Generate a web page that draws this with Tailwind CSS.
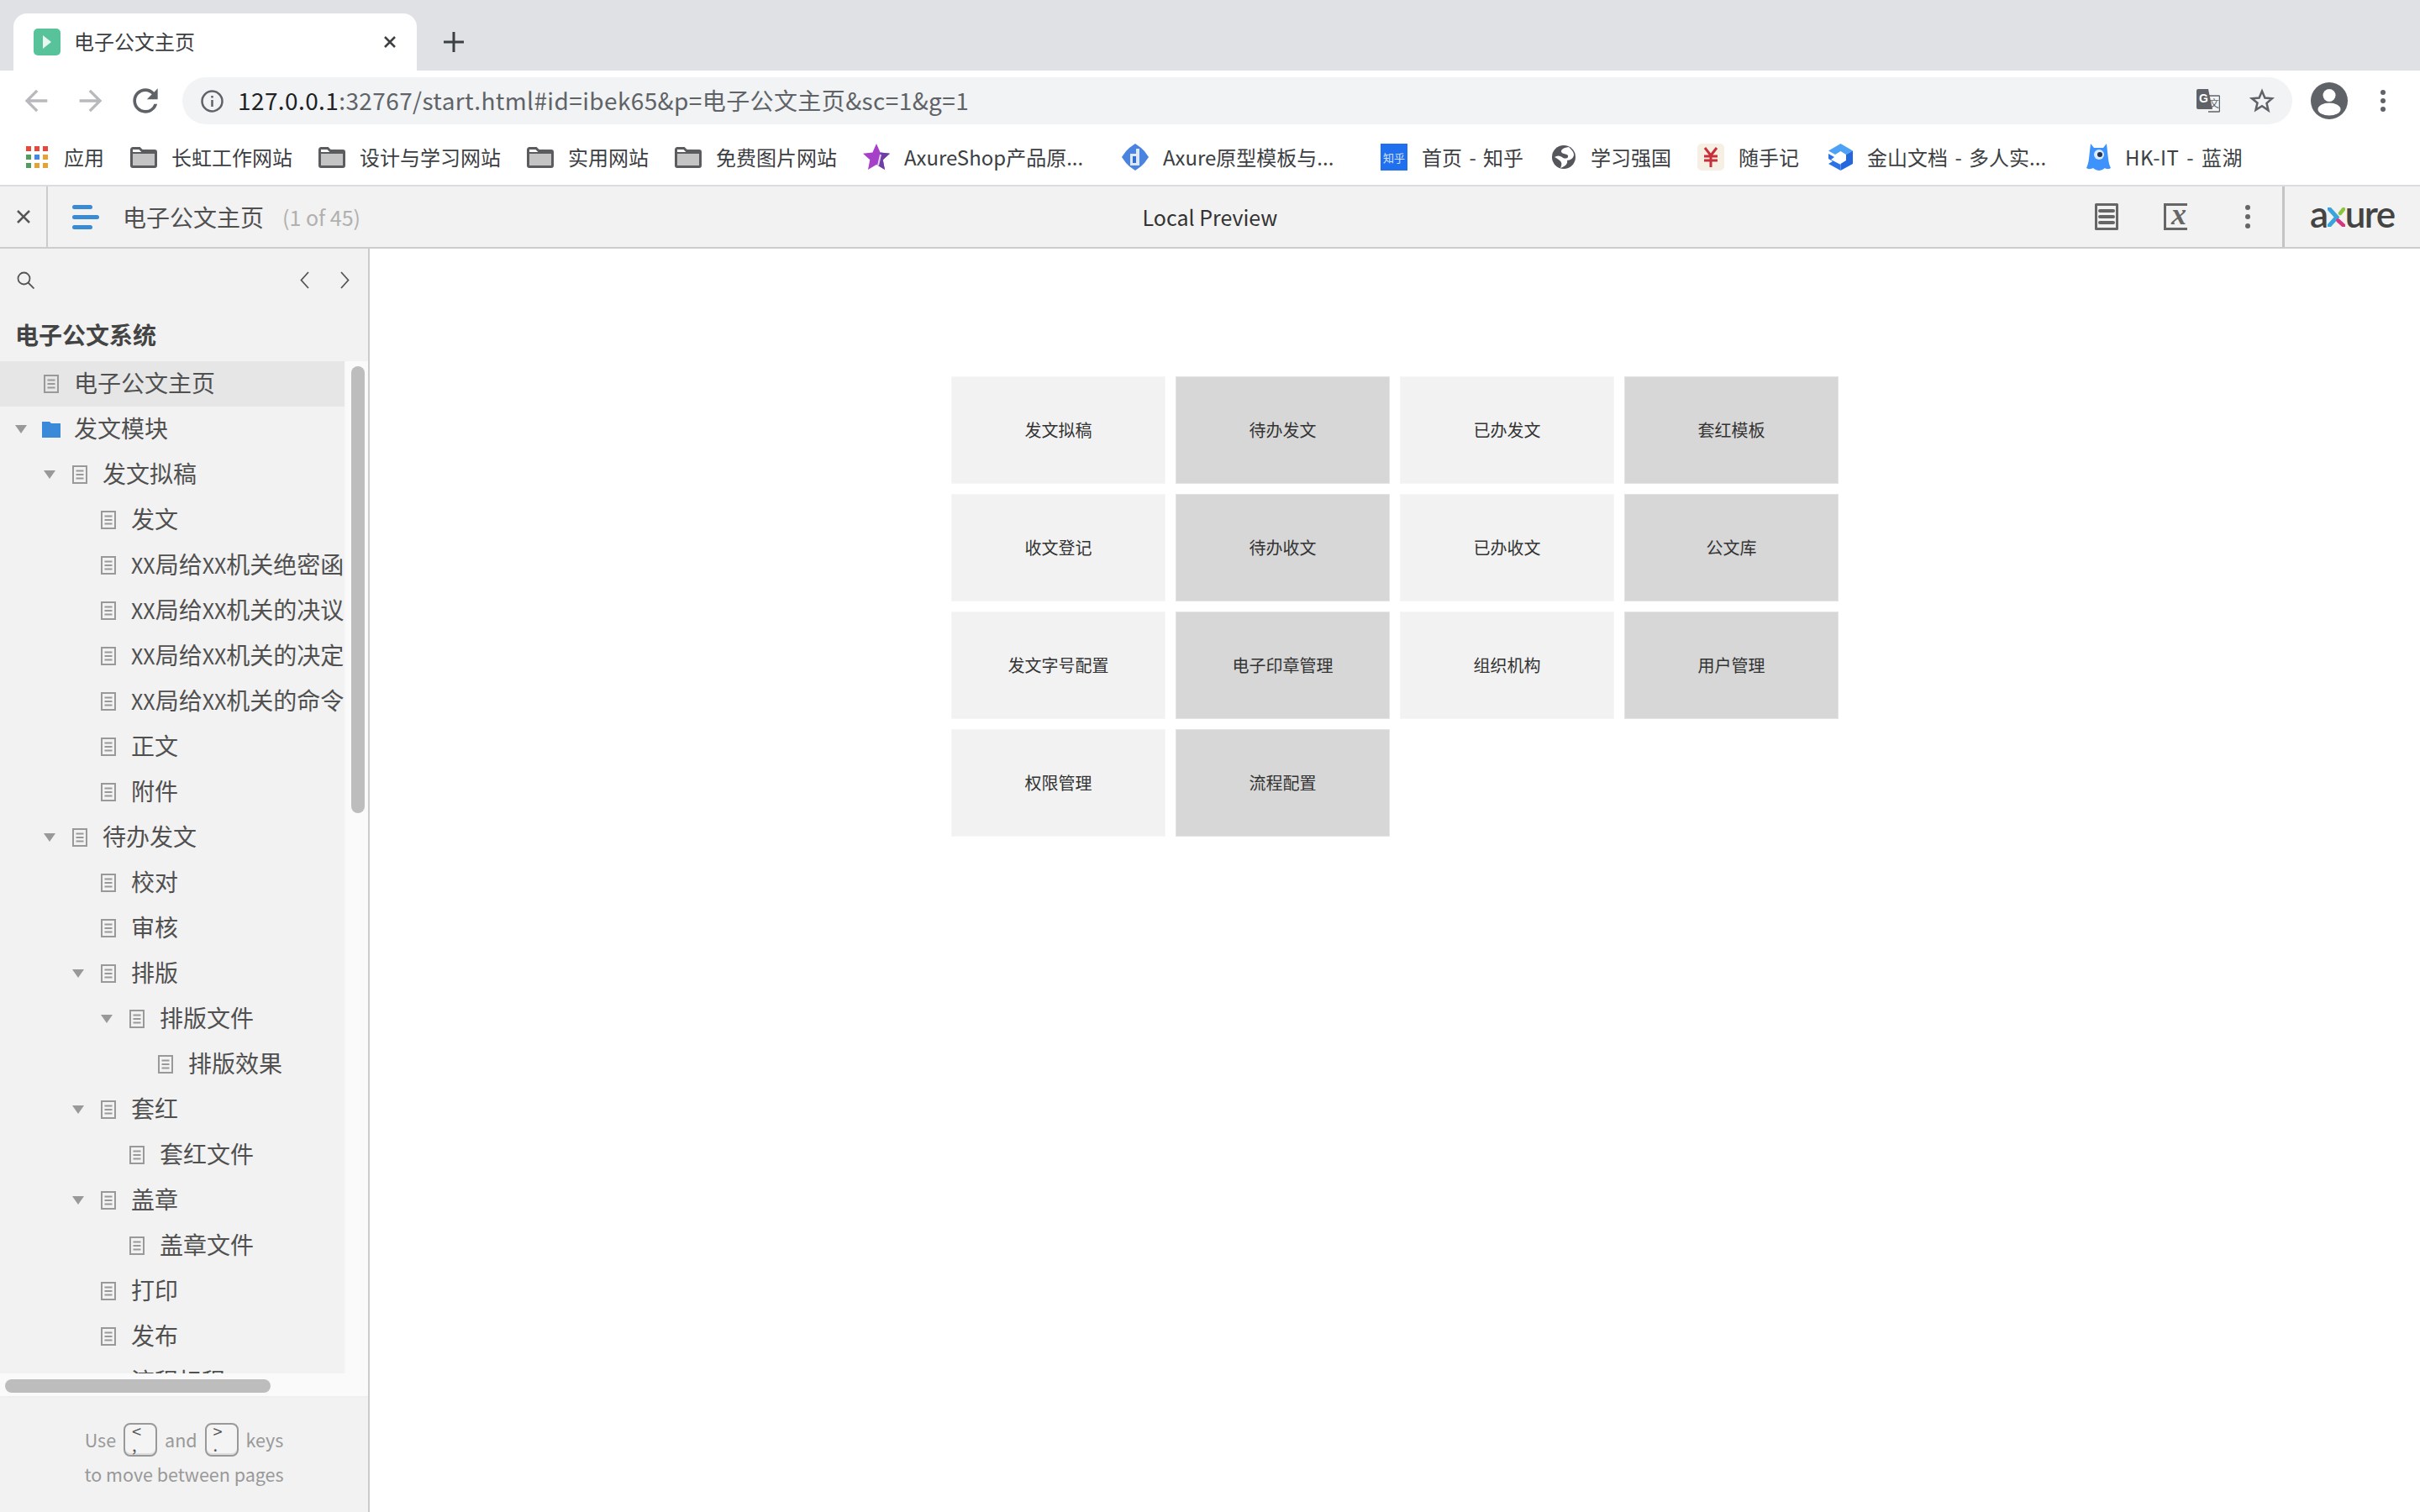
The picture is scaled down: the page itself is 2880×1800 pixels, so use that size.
<!DOCTYPE html>
<html lang="en">
<head>
    <meta charset="UTF-8">
    <title>电子公文主页</title>
    <script src="https://cdn.jsdelivr.net/npm/@tailwindcss/browser@4"></script>
</head>
<body class="w-[2880px] h-[1800px] overflow-hidden bg-white flex flex-col font-['Noto_Sans_CJK_SC',sans-serif]">
    <!-- Shared icons -->
    <svg class="hidden">
        <symbol id="doc" viewBox="0 0 18 22">
            <path d="M1 1h16v20H1z" fill="none" stroke="#999" stroke-width="2"/>
            <path d="M4.5 6.5h9M4.5 11h9M4.5 15.500h9" stroke="#999" stroke-width="2"/>
        </symbol>
        <symbol id="caret" viewBox="0 0 14 10">
            <path d="M0 0h14L7 10z" fill="#999"/>
        </symbol>
        <symbol id="bmfolder" viewBox="0 0 32 25">
            <path d="M1.500 6h29v16a1.500 1.500 0 0 1-1.500 1.500H3A1.500 1.500 0 0 1 1.500 22z" fill="#c4c4c4"/>
            <path d="M1.500 3A1.500 1.500 0 0 1 3 1.500h8l3 3h15A1.500 1.500 0 0 1 30.500 6v16a1.500 1.500 0 0 1-1.500 1.500H3A1.500 1.500 0 0 1 1.500 22z" fill="none" stroke="#5a5c60" stroke-width="3"/>
            <path d="M3 7h26" stroke="#5a5c60" stroke-width="2"/>
        </symbol>
    </svg>

    <!-- Tab strip -->
    <div class="h-[84px] bg-[#dfe1e5] flex items-end shrink-0">
        <div class="ml-4 w-[480px] h-[68px] bg-white rounded-t-[16px] flex items-center pl-6 pr-6">
            <div class="w-8 h-8 rounded-[5px] bg-[#58c39b] flex items-center justify-center">
                <svg class="w-3 h-4" viewBox="0 0 12 16"><path d="M1 0l10 8-10 8z" fill="#e8f7f1"/></svg>
            </div>
            <span class="ml-4 pb-[3px] text-[24px] leading-none text-[#3c4043]">电子公文主页</span>
            <svg class="ml-auto w-4 h-4" viewBox="0 0 16 16"><path d="M2 2l12 12M14 2L2 14" stroke="#3c4043" stroke-width="2.500"/></svg>
        </div>
        <svg class="ml-8 mb-[22px] w-6 h-6" viewBox="0 0 24 24"><path d="M12 0v24M0 12h24" stroke="#3c4043" stroke-width="3"/></svg>
    </div>

    <!-- Address row -->
    <div class="h-[64px] flex items-center shrink-0 pl-[23px] pt-2">
        <svg class="w-10 h-10" viewBox="0 0 24 24"><path d="M20 11H7.830l5.590-5.590L12 4l-8 8 8 8 1.410-1.410L7.830 13H20v-2z" fill="#b7b9bc"/></svg>
        <svg class="ml-[25px] w-10 h-10" viewBox="0 0 24 24"><path d="M4 11h12.170l-5.590-5.590L12 4l8 8-8 8-1.410-1.410L16.170 13H4v-2z" fill="#b7b9bc"/></svg>
        <svg class="ml-[23px] w-11 h-11" viewBox="0 0 24 24"><path d="M17.650 6.350A7.958 7.958 0 0 0 12 4c-4.420 0-7.990 3.580-7.990 8s3.570 8 7.990 8c3.730 0 6.840-2.550 7.730-6h-2.080A5.990 5.990 0 0 1 12 18c-3.310 0-6-2.690-6-6s2.690-6 6-6c1.660 0 3.140.690 4.220 1.780L13 11h7V4l-2.350 2.350z" fill="#5f6368"/></svg>
        <div class="ml-[22px] w-[2511px] h-14 rounded-full bg-[#f1f3f4] flex items-center pl-[22px] pr-[21px]">
            <svg class="w-[27px] h-[27px]" viewBox="0 0 27 27"><circle cx="13.500" cy="13.500" r="12" fill="none" stroke="#5f6368" stroke-width="2.500"/><path d="M13.500 12v8M13.500 7v2.500" stroke="#5f6368" stroke-width="2.500"/></svg>
            <div class="ml-[17px] pb-[2px] text-[28px] leading-none tracking-[0.4px] text-[#5f6368] whitespace-nowrap"><span class="text-[#202124]">127.0.0.1</span>:32767/start.html#id=ibek65&amp;p=电子公文主页&amp;sc=1&amp;g=1</div>
            <svg class="ml-auto w-[28px] h-[28px]" viewBox="0 0 28 28">
                <path d="M11 8h15.500a1 1 0 0 1 1 1v17a1 1 0 0 1-1 1H14" fill="#f1f3f4" stroke="#5f6368" stroke-width="1.500"/>
                <path d="M2 0h12l5 24H2a2 2 0 0 1-2-2V2a2 2 0 0 1 2-2z" fill="#5f6368"/>
                <text x="3" y="16" font-size="14" font-weight="700" fill="#fff" font-family="Liberation Sans">G</text>
                <text x="15" y="22" font-size="12" fill="#5f6368">文</text>
            </svg>
            <svg class="ml-[35px] w-[30px] h-[30px]" viewBox="0 0 30 30"><path d="M15 3.500l3.400 8 8.600.7-6.500 5.700 2 8.500L15 21.300 7.500 25.900l2-8.500L3 12.200l8.600-.7z" fill="none" stroke="#5f6368" stroke-width="2.500"/></svg>
        </div>
        <svg class="ml-[22px] w-11 h-11" viewBox="0 0 44 44">
            <circle cx="22" cy="22" r="22" fill="#5f6368"/>
            <circle cx="22" cy="15.500" r="7.500" fill="#fff"/>
            <ellipse cx="22" cy="32" rx="13.500" ry="7.500" fill="#fff"/>
        </svg>
        <div class="ml-[39px] flex flex-col gap-1">
            <div class="w-1.5 h-1.5 rounded-full bg-[#5f6368]"></div>
            <div class="w-1.5 h-1.5 rounded-full bg-[#5f6368]"></div>
            <div class="w-1.5 h-1.5 rounded-full bg-[#5f6368]"></div>
        </div>
    </div>

    <!-- Bookmarks bar -->
    <div class="h-[74px] shrink-0 border-b-2 border-[#dadce0] flex items-center pl-[31px] pt-[6px] gap-[31px] text-[24px] leading-none text-[#3c4043] whitespace-nowrap">
        <div class="flex items-center gap-[19px]">
            <div class="grid grid-cols-3 gap-1 w-[26px]">
                <div class="h-1.5 bg-[#e5483c]"></div><div class="h-1.5 bg-[#e5483c]"></div><div class="h-1.5 bg-[#e5483c]"></div>
                <div class="h-1.5 bg-[#519c5e]"></div><div class="h-1.5 bg-[#4287ec]"></div><div class="h-1.5 bg-[#e7a235]"></div>
                <div class="h-1.5 bg-[#519c5e]"></div><div class="h-1.5 bg-[#e7a235]"></div><div class="h-1.5 bg-[#e7a235]"></div>
            </div>
            <span>应用</span>
        </div>
        <div class="flex items-center gap-[17px]"><svg class="w-8 h-[25px]"><use href="#bmfolder"></use></svg><span>长虹工作网站</span></div>
        <div class="flex items-center gap-[17px]"><svg class="w-8 h-[25px]"><use href="#bmfolder"></use></svg><span>设计与学习网站</span></div>
        <div class="flex items-center gap-[17px]"><svg class="w-8 h-[25px]"><use href="#bmfolder"></use></svg><span>实用网站</span></div>
        <div class="flex items-center gap-[17px]"><svg class="w-8 h-[25px]"><use href="#bmfolder"></use></svg><span>免费图片网站</span></div>
        <div class="flex items-center gap-[17px]">
            <svg class="w-8 h-8" viewBox="0 0 32 32">
                <path d="M16 0l4.600 10.500L32 11.700l-8.300 7.500L26 31l-10-6-10 6 2.300-11.800L0 11.700l11.400-1.200z" fill="#a640c9"/>
                <path d="M20.600 10.500L32 11.700l-8.300 7.500L26 31l-8-5z" fill="#6d3fa6"/>
                <path d="M21 13l-3 13" stroke="#e3d4ee" stroke-width="2"/>
            </svg>
            <span class="w-[228px]">AxureShop产品原...</span>
        </div>
        <div class="flex items-center gap-[17px]">
            <svg class="w-8 h-8" viewBox="0 0 32 32">
                <path d="M16 0l7 5 4 4 5 7-5 7-4 4-7 5-7-5-4-4-5-7 5-7 4-4z" fill="#4a83e0"/>
                <path d="M17 6h4v20h-11v-14h7z" fill="#dce8f8"/>
                <path d="M13 15h4v8h-4z" fill="#2f6fd0"/>
            </svg>
            <span class="w-[228px]">Axure原型模板与...</span>
        </div>
        <div class="flex items-center gap-[17px]">
            <div class="w-8 h-8 bg-[#1f6fee] flex items-center justify-center text-[13px] text-white/80">知乎</div>
            <span class="w-[124px] [word-spacing:3px]">首页 - 知乎</span>
        </div>
        <div class="flex items-center gap-[18px]">
            <svg class="w-[28px] h-[28px]" viewBox="0 0 28 28">
                <circle cx="14" cy="14" r="14" fill="#54565b"/>
                <path d="M20 2c-7 1-11 4-8 7 3 2 8 1 7 5-1 2-5 2-7 0-3-2-6-2-9 0 2 1 4 2 6 4 3 2 3 5 1 9 6-2 9-5 8-9 4 0 8-3 8-7 0-3-3-6-6-9z" fill="#fff"/>
            </svg>
            <span>学习强国</span>
        </div>
        <div class="flex items-center gap-[17px]">
            <div class="w-8 h-8 rounded-[5px] bg-[#f5efe4] flex items-center justify-center">
                <svg class="w-5 h-6" viewBox="0 0 20 24"><path d="M3 1l7 9 7-9M2 11h16M2 16h16M10 10v14" fill="none" stroke="#c92f38" stroke-width="3"/></svg>
            </div>
            <span class="w-[76px]">随手记</span>
        </div>
        <div class="flex items-center gap-[17px]">
            <svg class="w-[29px] h-8" viewBox="0 0 29 32">
                <path d="M14.500 0L29 8.500 21 13l-6.500-4L8 13 0 8.500z" fill="#4ea2f5"/>
                <path d="M21 13l8-4.500V24l-14.500 8v-8l6.500-4z" fill="#2267dd"/>
                <path d="M0 12l7 4-4 3 11.500 6v7L0 24l5-3-5-3z" fill="#2c74e6"/>
            </svg>
            <span class="w-[230px] [word-spacing:3px]">金山文档 - 多人实...</span>
        </div>
        <div class="flex items-center gap-[17px]">
            <svg class="w-[29px] h-8" viewBox="0 0 29 32">
                <path d="M5 0l4 5h11l4-5 1 9c1 8 1 14 4 20-3 2-6 1-7 0-2 2-5 3-7 3s-5-1-7-3c-2 1-5 2-8 0 3-6 3-12 4-20z" fill="#3d92fb"/>
                <circle cx="15" cy="13" r="6" fill="#dbeaff"/>
                <circle cx="16" cy="13" r="3" fill="#24334e"/>
            </svg>
            <span class="tracking-[0.5px] [word-spacing:3px]">HK-IT - 蓝湖</span>
        </div>
    </div>

    <!-- Axure toolbar -->
    <div class="h-[74px] shrink-0 border-b-2 border-[#ccc] bg-[#f2f2f2] grid grid-cols-[1fr_auto_1fr] items-center">
        <div class="flex items-center h-full">
            <div class="w-[57px] h-full border-r-2 border-[#ccc] flex items-center justify-center">
                <svg class="w-[18px] h-[18px]" viewBox="0 0 18 18"><path d="M2 2l14 14M16 2L2 16" stroke="#555" stroke-width="2.500"/></svg>
            </div>
            <div class="ml-[29px] w-8 flex flex-col gap-[7px]">
                <div class="w-6 h-[5px] rounded-sm bg-[#3a8bd2]"></div>
                <div class="w-8 h-[5px] rounded-sm bg-[#3a8bd2]"></div>
                <div class="w-6 h-[5px] rounded-sm bg-[#3a8bd2]"></div>
            </div>
            <span class="ml-[28px] text-[28px] leading-none text-[#505050]">电子公文主页</span>
            <span class="ml-[22px] text-[25px] leading-none text-[#b0b0b0]">(1 of 45)</span>
        </div>
        <div class="text-[25px] leading-none text-[#333]">Local Preview</div>
        <div class="flex items-center justify-end h-full">
            <svg class="w-[28px] h-8" viewBox="0 0 28 32">
                <path d="M1.500 1.500h25v29h-25z" fill="none" stroke="#666" stroke-width="3" stroke-linejoin="round"/>
                <path d="M6 9h16M6 16h16M6 23h16" stroke="#666" stroke-width="4" stroke-linecap="round"/>
            </svg>
            <svg class="ml-[54px] w-[32px] h-8 overflow-visible" viewBox="0 0 32 32">
                <path d="M28 1.500H1.500v29H28" fill="none" stroke="#666" stroke-width="3"/>
                <text x="9" y="25" font-size="36" font-style="italic" font-weight="700" fill="#666" font-family="Liberation Serif">x</text>
            </svg>
            <div class="ml-[65px] flex flex-col gap-[5px]">
                <div class="w-1.5 h-1.5 rounded-full bg-[#666]"></div>
                <div class="w-1.5 h-1.5 rounded-full bg-[#666]"></div>
                <div class="w-1.5 h-1.5 rounded-full bg-[#666]"></div>
            </div>
            <div class="ml-[38px] w-[3px] h-full bg-[#c4c4c4]"></div>
            <div class="ml-[30px] w-[131px] flex items-center font-['Lato',sans-serif] font-semibold text-[44px] leading-none tracking-[-1.5px] text-[#444]">
                <span class="pb-[8px]">a</span>
                <svg class="w-[21px] h-[23px] shrink-0" viewBox="0 0 21 23">
                    <path d="M2 1.500l9 10-9 10" fill="none" stroke="#39a4dc" stroke-width="5" stroke-linecap="round"/>
                    <path d="M19 2l-4 5" fill="none" stroke="#8cc63f" stroke-width="4.500" stroke-linecap="round"/>
                    <path d="M12.500 15.500l6.500 6" fill="none" stroke="#d6357f" stroke-width="4.500" stroke-linecap="round"/>
                </svg>
                <span class="pb-[8px]">ure</span>
            </div>
        </div>
    </div>

    <!-- Body -->
    <div class="flex-1 flex min-h-0">
        <!-- Page tree -->
        <aside class="w-[440px] shrink-0 border-r-2 border-[#ccc] bg-[#f2f2f2] flex flex-col text-[28px] leading-none text-[#505050]">
            <div class="h-[134px] shrink-0 px-5 pt-[27px]">
                <div class="flex items-center h-[21px]">
                    <svg class="w-[21px] h-[21px]" viewBox="0 0 21 21"><circle cx="8.500" cy="8.500" r="7" fill="none" stroke="#555" stroke-width="1.800"/><path d="M13.500 13.500l7 7" stroke="#555" stroke-width="1.800"/></svg>
                    <svg class="ml-auto w-[11px] h-[21px]" viewBox="0 0 11 21"><path d="M10 1L1.500 10.500 10 20" fill="none" stroke="#555" stroke-width="1.800"/></svg>
                    <svg class="ml-[37px] mr-0.5 w-[11px] h-[21px]" viewBox="0 0 11 21"><path d="M1 1l8.500 9.500L1 20" fill="none" stroke="#555" stroke-width="1.800"/></svg>
                </div>
                <div class="mt-10 -ml-0.5 font-bold text-[#444]">电子公文系统</div>
            </div>

            <div class="h-[1205px] shrink-0 flex bg-[#fafafa]">
                <div id="tree" class="w-[412px] h-full overflow-hidden bg-[#f2f2f2] border-r-2 border-[#f8f8f8] whitespace-nowrap"></div>
                <div class="flex-1 pl-1.5 pt-1.5">
                    <div class="w-4 h-[532px] rounded-full bg-[#bdbdbd]"></div>
                </div>
            </div>

            <div class="h-[27px] shrink-0 bg-[#fafafa] pl-1.5 pt-[7px]">
                <div class="w-[316px] h-4 rounded-full bg-[#bdbdbd]"></div>
            </div>

            <!-- Keyboard hint -->
            <div class="flex-1 border-t-2 border-[#efefef] flex flex-col items-center pt-[30px] text-[21.5px] text-[#999]">
                <div class="flex items-center gap-[9px] h-10">
                    <span>Use</span>
                    <div class="w-10 h-10 rounded-lg border-2 border-[#999] bg-[#f4f4f4] shadow-[inset_0_-2px_0_#ddd] pl-2 flex flex-col text-[20px] leading-[16px] text-[#555]"><span>&lt;</span><span>,</span></div>
                    <span>and</span>
                    <div class="w-10 h-10 rounded-lg border-2 border-[#999] bg-[#f4f4f4] shadow-[inset_0_-2px_0_#ddd] pl-2 flex flex-col text-[20px] leading-[16px] text-[#555]"><span>&gt;</span><span>.</span></div>
                    <span>keys</span>
                </div>
                <div class="mt-[10px]">to move between pages</div>
            </div>
        </aside>

        <!-- Preview canvas -->
        <main class="flex-1 bg-white pl-[692px] pt-[152px]">
            <div class="grid grid-cols-[repeat(4,255px)] auto-rows-[128px] gap-3 text-[20px] text-[#333]">
                <div class="bg-[#f2f2f2] border border-[#f6f6f6] flex items-center justify-center">发文拟稿</div>
                <div class="bg-[#d7d7d7] border border-[#e4e4e4] flex items-center justify-center">待办发文</div>
                <div class="bg-[#f2f2f2] border border-[#f6f6f6] flex items-center justify-center">已办发文</div>
                <div class="bg-[#d7d7d7] border border-[#e4e4e4] flex items-center justify-center">套红模板</div>
                <div class="bg-[#f2f2f2] border border-[#f6f6f6] flex items-center justify-center">收文登记</div>
                <div class="bg-[#d7d7d7] border border-[#e4e4e4] flex items-center justify-center">待办收文</div>
                <div class="bg-[#f2f2f2] border border-[#f6f6f6] flex items-center justify-center">已办收文</div>
                <div class="bg-[#d7d7d7] border border-[#e4e4e4] flex items-center justify-center">公文库</div>
                <div class="bg-[#f2f2f2] border border-[#f6f6f6] flex items-center justify-center">发文字号配置</div>
                <div class="bg-[#d7d7d7] border border-[#e4e4e4] flex items-center justify-center">电子印章管理</div>
                <div class="bg-[#f2f2f2] border border-[#f6f6f6] flex items-center justify-center">组织机构</div>
                <div class="bg-[#d7d7d7] border border-[#e4e4e4] flex items-center justify-center">用户管理</div>
                <div class="bg-[#f2f2f2] border border-[#f6f6f6] flex items-center justify-center">权限管理</div>
                <div class="bg-[#d7d7d7] border border-[#e4e4e4] flex items-center justify-center">流程配置</div>
            </div>
        </main>
    </div>

    <script>
        // [label, depth, has caret]
        const pages = [
            ['电子公文主页', 0, false],
            ['发文模块', 0, true],
            ['发文拟稿', 1, true],
            ['发文', 2, false],
            ['XX局给XX机关绝密函', 2, false],
            ['XX局给XX机关的决议', 2, false],
            ['XX局给XX机关的决定', 2, false],
            ['XX局给XX机关的命令', 2, false],
            ['正文', 2, false],
            ['附件', 2, false],
            ['待办发文', 1, true],
            ['校对', 2, false],
            ['审核', 2, false],
            ['排版', 2, true],
            ['排版文件', 3, true],
            ['排版效果', 4, false],
            ['套红', 2, true],
            ['套红文件', 3, false],
            ['盖章', 2, true],
            ['盖章文件', 3, false],
            ['打印', 2, false],
            ['发布', 2, false],
            ['流程标程', 2, false]
        ];

        const caret = '<svg class="w-[14px] h-[10px] shrink-0"><use href="#caret"></use></svg>';
        const page = '<svg class="absolute left-[34px] w-[18px] h-[22px]"><use href="#doc"></use></svg>';
        const folder = '<svg class="absolute left-[32px] w-[22px] h-[19px]" viewBox="0 0 22 19"><path d="M0 0h9l2 2h11v17H0z" fill="#3b89d9"/></svg>';

        document.getElementById('tree').innerHTML = pages.map(([label, depth, open], i) => {
            // the last row sits under the scroll edge, only its text top shows
            const icon = i === 1 ? folder : (i === pages.length - 1 ? '' : page);
            return `
            <div class="h-[54px] flex items-center overflow-hidden ${i === 0 ? 'bg-[#e6e6e6]' : ''}" style="padding-left:${18 + depth * 34}px">
                <div class="relative w-[70px] h-full shrink-0 flex items-center">
                    ${open ? caret : ''}${icon}
                </div>
                <span class="pb-[4px]">${label.replace(/XX/g, '<span class="text-[25px]">XX</span>')}</span>
            </div>
        `;
        }).join('');
    </script>
</body>
</html>
